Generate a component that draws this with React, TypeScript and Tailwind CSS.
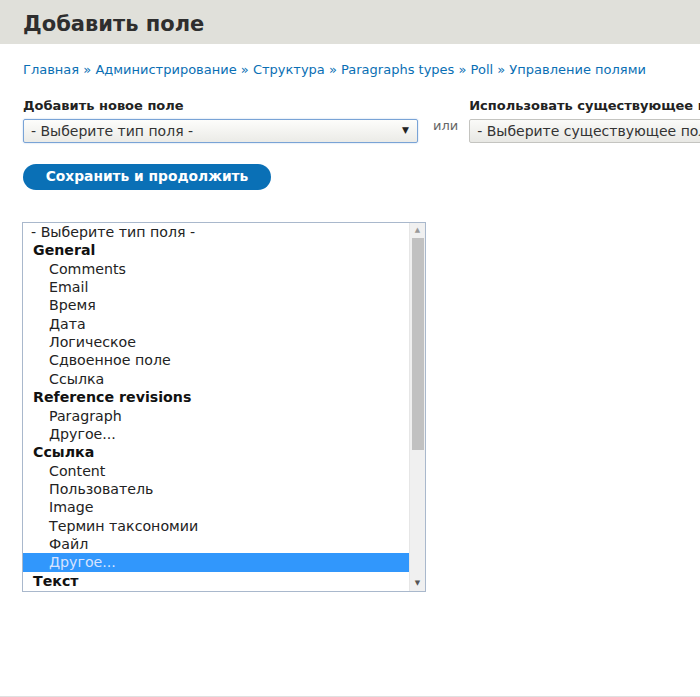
import React from "react";

type Row = { label: string; group?: boolean; selected?: boolean; top?: boolean };

const rows: Row[] = [
  { label: "- Выберите тип поля -", top: true },
  { label: "General", group: true },
  { label: "Comments" },
  { label: "Email" },
  { label: "Время" },
  { label: "Дата" },
  { label: "Логическое" },
  { label: "Сдвоенное поле" },
  { label: "Ссылка" },
  { label: "Reference revisions", group: true },
  { label: "Paragraph" },
  { label: "Другое..." },
  { label: "Ссылка", group: true },
  { label: "Content" },
  { label: "Пользователь" },
  { label: "Image" },
  { label: "Термин таксономии" },
  { label: "Файл" },
  { label: "Другое...", selected: true },
  { label: "Текст", group: true },
];

const crumbs = ["Главная", "Администрирование", "Структура", "Paragraphs types", "Poll", "Управление полями"];

export default function App() {
  return (
    <div
      className="min-h-[697px] w-[700px] overflow-hidden bg-white border-b border-[#e0e0e0] text-[#222]"
      style={{ fontFamily: '"DejaVu Sans", Verdana, sans-serif' }}
    >
      <div className="h-[44px] bg-[#e0e0da] px-[23px] pt-[4px] flex items-center">
        <h1 className="text-[21px] font-bold text-[#2e2e2e] leading-none">Добавить поле</h1>
      </div>

      <div className="px-[23px] pt-[17px]">
        <div className="text-[13px] leading-[18px] text-[#0a6fb4] flex flex-wrap whitespace-pre">
          {crumbs.map((c, i) => (
            <React.Fragment key={i}>
              {i > 0 && <span className="text-[#0a6fb4]"> » </span>}
              <span>{c}</span>
            </React.Fragment>
          ))}
        </div>

        <div className="mt-[18px] flex items-start whitespace-nowrap">
          <div className="w-[395px] shrink-0">
            <div className="text-[13px] font-bold leading-[18px] text-[#222]">Добавить новое поле</div>
            <div className="mt-[4px] h-[24px] rounded-[2px] border border-[#79a3d6] bg-gradient-to-b from-[#fdfdfb] to-[#ebebe7] shadow-[0_0_2px_#b8cfe9] flex items-center justify-between pl-[7px] pr-[8px]">
              <span className="text-[14px] leading-none text-[#333]">- Выберите тип поля -</span>
              <span className="text-[9px] text-[#222]">▼</span>
            </div>
          </div>
          <div className="ml-[15px] mt-[20px] text-[13px] text-[#666] leading-[18px]">или</div>
          <div className="ml-[11px] shrink-0">
            <div className="text-[13px] font-bold leading-[18px] text-[#222]">Использовать существующее поле</div>
            <div className="mt-[4px] h-[24px] w-[300px] rounded-[2px] border border-[#c4c4c0] bg-gradient-to-b from-[#fafaf8] to-[#e8e8e4] flex items-center pl-[7px]">
              <span className="text-[14px] leading-none text-[#333]">- Выберите существующее поле -</span>
            </div>
          </div>
        </div>

        <button className="mt-[21px] h-[26px] w-[248px] rounded-full bg-[#0a70b6] text-white text-[13.8px] font-bold flex items-center justify-center leading-none">
          Сохранить и продолжить
        </button>

        <div className="mt-[32px] -ml-[1px] w-[404px] h-[370px] border border-[#a9b8cc] flex">
          <div className="flex-1 flex flex-col">
            {rows.map((r, i) => (
              <div
                key={i}
                className={
                  "h-[18.35px] flex items-center text-[14.2px] leading-none " +
                  (r.selected ? "bg-[#3197fc] text-[#d8e4ff] " : "") +
                  (r.group ? "font-bold pl-[10px] text-[#111]" : r.top ? "pl-[8px] text-[#222]" : "pl-[26px] text-[#222]")
                }
              >
                {r.label}
              </div>
            ))}
          </div>
          <div className="w-[16px] bg-[#f0f0f0] border-l border-[#e6e6e6] flex flex-col items-center">
            <div className="h-[15px] flex items-center justify-center text-[7px] text-[#999]">▲</div>
            <div className="w-[12px] h-[212px] bg-[#c1c1c1]" />
            <div className="flex-1" />
            <div className="h-[16px] flex items-center justify-center text-[7px] text-[#555]">▼</div>
          </div>
        </div>
      </div>
    </div>
  );
}
